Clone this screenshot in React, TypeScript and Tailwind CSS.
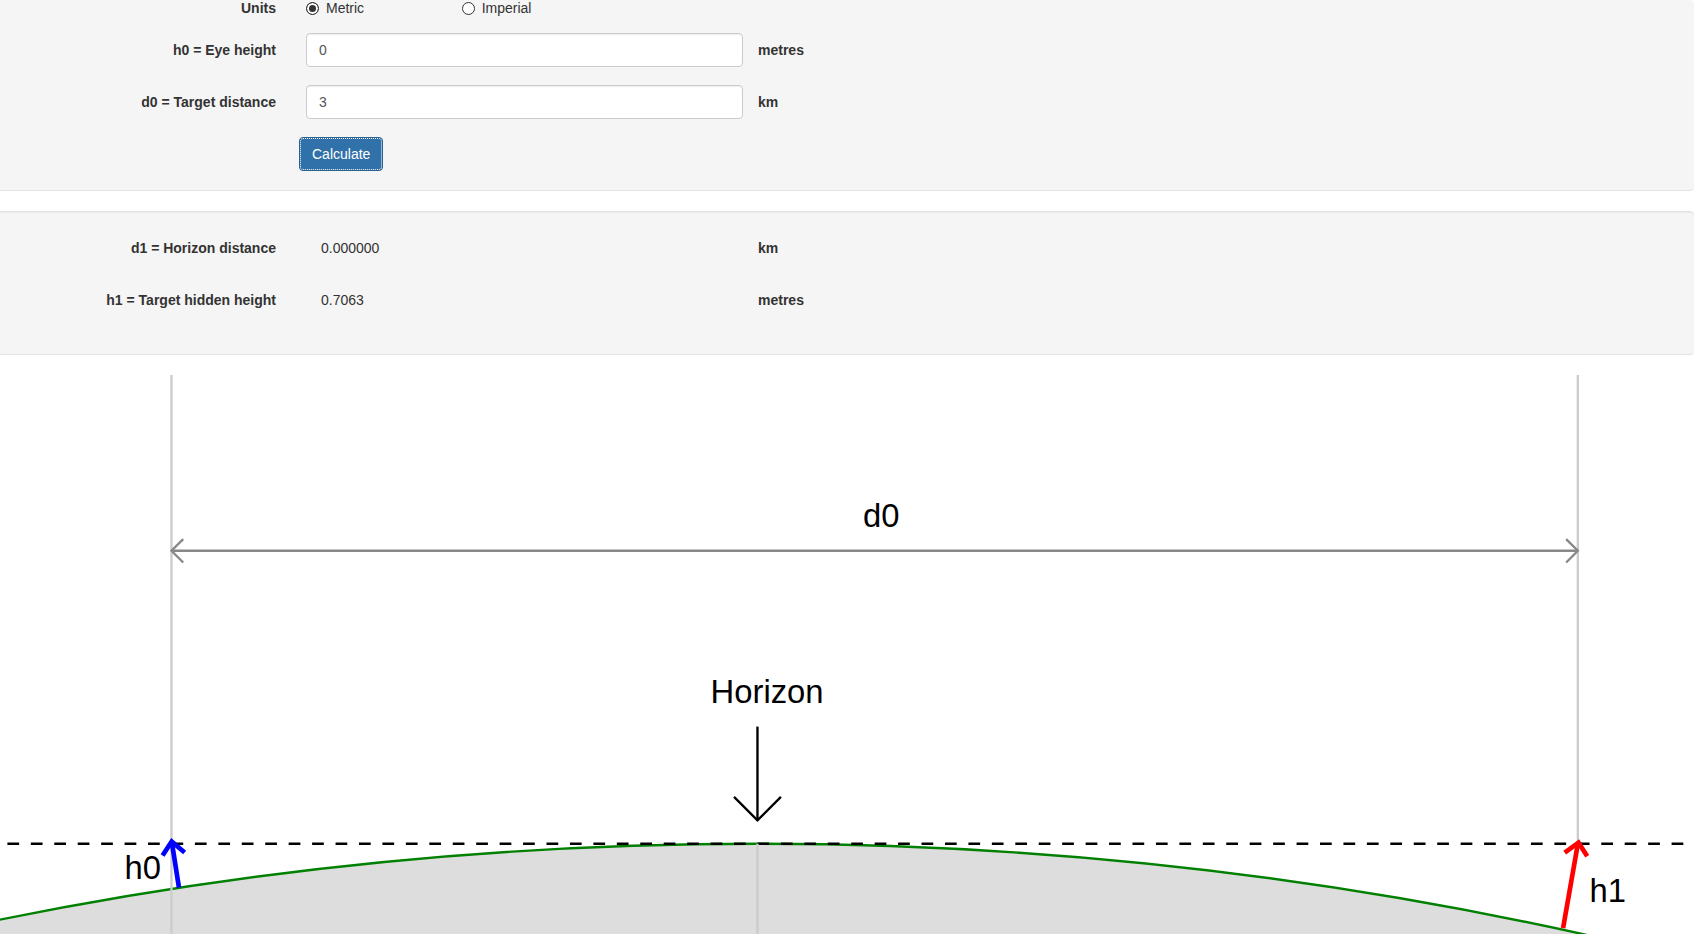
import React, { useState } from 'react';

type Units = 'metric' | 'imperial';

const UNIT_INFO = {
  metric: { small: 'metres', large: 'km', ratio: 1000, radius: 6371 },
  imperial: { small: 'feet', large: 'miles', ratio: 5280, radius: 3959 },
};

function calculate(units: Units, eyeHeight: number, distance: number) {
  const { ratio, radius } = UNIT_INFO[units];
  const h = eyeHeight / ratio;
  const horizon = Math.sqrt(h * (2 * radius + h));
  const beyond = distance - horizon;
  const hidden = beyond > 0 ? Math.sqrt(beyond * beyond + radius * radius) - radius : 0;
  return { horizon: horizon.toFixed(6), hidden: (hidden * ratio).toFixed(4) };
}

const rowClass = 'grid grid-cols-[291fr_467fr_936fr] items-center';
const labelClass = 'px-[15px] text-right font-bold';
const wellClass = 'flex flex-col gap-[18px] rounded-r border-b border-[#e3e3e3] bg-[#f5f5f5]';

interface FieldProps {
  id: string;
  label: string;
  unit: string;
  value: string;
  onChange: (value: string) => void;
}

function Field({ id, label, unit, value, onChange }: FieldProps) {
  return (
    <div className={rowClass}>
      <label htmlFor={id} className={labelClass}>{label}</label>
      <div className="px-[15px]">
        <input
          id={id}
          type="text"
          value={value}
          onChange={(e) => onChange(e.target.value)}
          className="block h-[34px] w-full rounded border border-[#ccc] bg-white px-3 text-[#555] shadow-[inset_0_1px_1px_rgba(0,0,0,0.075)] outline-none focus:border-[#66afe9]"
        />
      </div>
      <span className="font-bold">{unit}</span>
    </div>
  );
}

function Result({ label, unit, value }: { label: string; unit: string; value: string }) {
  return (
    <div className={`${rowClass} h-[34px]`}>
      <span className={labelClass}>{label}</span>
      <output className="px-[30px]">{value}</output>
      <span className="font-bold">{unit}</span>
    </div>
  );
}

interface UnitRadioProps {
  label: string;
  checked: boolean;
  onSelect: () => void;
}

function UnitRadio({ label, checked, onSelect }: UnitRadioProps) {
  return (
    <label className="flex items-center gap-[7px] pl-[15px]">
      <input
        type="radio"
        name="units"
        checked={checked}
        onChange={onSelect}
        className="size-[13px] appearance-none rounded-full border border-[#333] bg-white checked:bg-[#333] checked:shadow-[inset_0_0_0_2px_#fff]"
      />
      {label}
    </label>
  );
}

function Diagram() {
  return (
    <svg
      viewBox="1.85 0 722.7 238.5"
      className="mt-5 block w-full"
      fill="none"
      fontFamily="'Liberation Sans', Arial, sans-serif"
      fontSize="14"
    >
      {/* earth */}
      <path d="M-75 249.9 A1628 1628 0 0 1 725 249.9 V300 H-75 Z" fill="#ddd" stroke="green" />
      {/* line of sight */}
      <path d="M5 200 H720" stroke="#000" strokeDasharray="5 5" />

      <path d="M75 0 V300 M325 200 V300 M675 0 V200" stroke="#ccc" />

      <g stroke="#888">
        <path d="M75 75 H675" />
        <path d="M80 70 L75 75 L80 80" />
        <path d="M670 70 L675 75 L670 80" />
      </g>

      <g stroke="#000">
        <path d="M325 150 V190" />
        <path d="M315 180 L325 190 L335 180" />
      </g>

      <g stroke="blue" strokeWidth="2">
        <path d="M78.2 218.7 L75.1 199" />
        <path d="M71.2 205 L75.1 199 L80.6 203.7" />
      </g>
      <g stroke="red" strokeWidth="2">
        <path d="M668.7 236 L675.1 199.5" />
        <path d="M669.4 203.8 L675.3 199.5 L679 205.3" />
      </g>

      <g fill="#000">
        <text x="370" y="65">d0</text>
        <text x="305" y="140">Horizon</text>
        <text x="55" y="215">h0</text>
        <text x="680" y="225">h1</text>
      </g>
    </svg>
  );
}

export default function App() {
  const [units, setUnits] = useState<Units>('metric');
  const [eyeHeight, setEyeHeight] = useState('0');
  const [distance, setDistance] = useState('3');
  const [result, setResult] = useState(calculate('metric', 0, 3));

  const { small, large } = UNIT_INFO[units];

  const handleSubmit = (e: React.FormEvent) => {
    e.preventDefault();
    setResult(calculate(units, Number(eyeHeight) || 0, Number(distance) || 0));
  };

  return (
    <div className="overflow-hidden bg-white font-['Liberation_Sans',Arial,sans-serif] text-sm text-[#333]">
      <form onSubmit={handleSubmit} className={`${wellClass} pt-[2px] pb-[19px]`}>
        <div className={`${rowClass} leading-[13px]`}>
          <span id="units-label" className={labelClass}>Units</span>
          <div role="radiogroup" aria-labelledby="units-label" className="grid grid-cols-3">
            <UnitRadio label="Metric" checked={units === 'metric'} onSelect={() => setUnits('metric')} />
            <UnitRadio label="Imperial" checked={units === 'imperial'} onSelect={() => setUnits('imperial')} />
          </div>
        </div>
        <Field id="h0" label="h0 = Eye height" unit={small} value={eyeHeight} onChange={setEyeHeight} />
        <Field id="d0" label="d0 = Target distance" unit={large} value={distance} onChange={setDistance} />
        <div className={rowClass}>
          <div className="col-start-2 pl-2">
            <button
              type="submit"
              className="block h-[34px] rounded border border-[#285e8e] bg-[#3071a9] px-3 text-white outline-1 -outline-offset-2 outline-dotted outline-white"
            >
              Calculate
            </button>
          </div>
        </div>
      </form>

      <section
        className={`${wellClass} mt-5 border-t pt-[19px] pb-[37px] shadow-[inset_0_1px_1px_rgba(0,0,0,0.05)]`}
      >
        <Result label="d1 = Horizon distance" unit={large} value={result.horizon} />
        <Result label="h1 = Target hidden height" unit={small} value={result.hidden} />
      </section>

      <Diagram />
    </div>
  );
}
